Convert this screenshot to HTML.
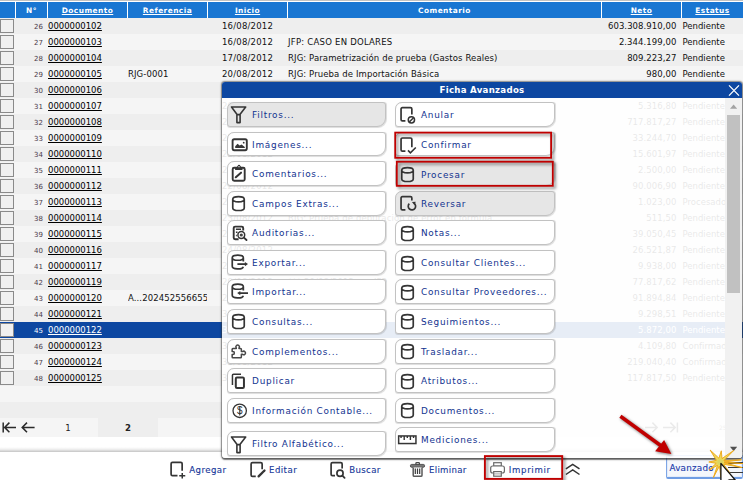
<!DOCTYPE html>
<html lang="es"><head><meta charset="utf-8"><title>Ficha Avanzados</title>
<style>
html,body{margin:0;padding:0;}
body{width:743px;height:480px;overflow:hidden;background:#fff;position:relative;font-family:"DejaVu Sans","Liberation Sans",sans-serif;font-size:8.5px;color:#111;}
.abs{position:absolute;}
#topstrip{left:0;top:0;width:743px;height:1px;background:#c2c2c2;}
.th{position:absolute;top:2px;height:16px;background:#1976d2;color:#fff;font-weight:bold;font-size:7.4px;letter-spacing:0.45px;text-align:center;line-height:17.6px;white-space:nowrap;}
.th u{text-decoration:underline;text-underline-offset:1px;}
.row{position:absolute;left:0;width:743px;height:16px;line-height:16px;white-space:nowrap;}
.row.e{background:#eeeeee;}
.row.o{background:#f5f5f5;}
.row.sel{background:#0d47a1;color:#fff;}
.row span{position:absolute;top:0;height:16px;}
.cb{position:absolute;left:0;top:1px;width:12px;height:12px;border:1px solid #8a8a8a;background:#f0f0f0;}
.n{left:16px;width:27px;text-align:right;font-size:7px;color:#4a3a4a;top:1px !important;}
.row.sel .n{color:#fff;}
.d{left:48px;text-decoration:underline;color:#000;letter-spacing:-0.02px;}
.row.sel .d{color:#fff;}
.r{left:128px;width:79px;overflow:hidden;letter-spacing:0.1px;}
.i{left:222px;letter-spacing:0.2px;}
.c{left:288px;letter-spacing:0.107px;}
.m{left:602px;width:74.5px;text-align:right;letter-spacing:0.07px;}
.s{left:682.5px;letter-spacing:0px;}
#popup{left:222px;top:82px;width:520px;height:376px;border-radius:3px;box-shadow:0 0 1.5px 0.8px rgba(50,50,50,0.58),0 1.2px 1.2px rgba(40,40,40,0.55);overflow:hidden;}
#ptitle{left:0;top:0;width:520px;height:16px;background:#0d47a1;color:#fff;font-weight:bold;font-size:8.6px;letter-spacing:0.29px;text-align:center;line-height:17px;}
#pbody{left:0;top:16px;width:520px;height:360px;background:rgba(255,255,255,0.9);}
.btn{position:absolute;width:157.5px;height:22.7px;border:1px solid #c2c2c2;border-radius:7px 3px 9px 3px;background:#fff;color:#12328f;font-size:8.9px;line-height:23px;white-space:nowrap;box-shadow:0.4px 0.7px 0.7px rgba(0,0,0,0.13);}
.btn.g{background:#e6e6e6;}
.btn svg{position:absolute;}
.btn b{position:absolute;left:24.3px;top:1.1px;font-weight:normal;letter-spacing:0.74px;}
.tb{position:absolute;top:463px;height:16px;line-height:15px;color:#16389a;font-size:8.6px;letter-spacing:0.45px;white-space:nowrap;-webkit-text-stroke:0.12px #16389a;}
</style></head><body>
<div class="abs" id="topstrip"></div>
<div class="th" style="left:0px;width:15px"></div>
<div class="th" style="left:16px;width:31px">N°</div>
<div class="th" style="left:48px;width:79px"><u>Documento</u></div>
<div class="th" style="left:128px;width:79px"><u>Referencia</u></div>
<div class="th" style="left:208px;width:79px"><u>Inicio</u></div>
<div class="th" style="left:288px;width:313px">Comentario</div>
<div class="th" style="left:602px;width:79px"><u>Neto</u></div>
<div class="th" style="left:682px;width:61px"><u>Estatus</u></div>
<div class="row e" style="top:18px"><i class="cb"></i><span class="n">26</span><span class="d">0000000102</span><span class="r"></span><span class="i">16/08/2012</span><span class="c"></span><span class="m">603.308.910,00</span><span class="s">Pendiente</span></div>
<div class="row o" style="top:34px"><i class="cb"></i><span class="n">27</span><span class="d">0000000103</span><span class="r"></span><span class="i">16/08/2012</span><span class="c" style="letter-spacing:0.24px">JFP: CASO EN DOLARES</span><span class="m">2.344.199,00</span><span class="s">Pendiente</span></div>
<div class="row e" style="top:50px"><i class="cb"></i><span class="n">28</span><span class="d">0000000104</span><span class="r"></span><span class="i">17/08/2012</span><span class="c">RJG: Parametrización de prueba (Gastos Reales)</span><span class="m">809.223,27</span><span class="s">Pendiente</span></div>
<div class="row o" style="top:66px"><i class="cb"></i><span class="n">29</span><span class="d">0000000105</span><span class="r">RJG-0001</span><span class="i">20/08/2012</span><span class="c">RJG: Prueba de Importación Básica</span><span class="m">980,00</span><span class="s">Pendiente</span></div>
<div class="row e" style="top:82px"><i class="cb"></i><span class="n">30</span><span class="d">0000000106</span><span class="r"></span><span class="i">20/08/2012</span><span class="c"></span><span class="m">1.250,00</span><span class="s">Pendiente</span></div>
<div class="row o" style="top:98px"><i class="cb"></i><span class="n">31</span><span class="d">0000000107</span><span class="r"></span><span class="i">20/08/2012</span><span class="c"></span><span class="m">5.316,80</span><span class="s">Pendiente</span></div>
<div class="row e" style="top:114px"><i class="cb"></i><span class="n">32</span><span class="d">0000000108</span><span class="r"></span><span class="i">21/08/2012</span><span class="c"></span><span class="m">717.817,27</span><span class="s">Pendiente</span></div>
<div class="row o" style="top:130px"><i class="cb"></i><span class="n">33</span><span class="d">0000000109</span><span class="r"></span><span class="i">21/08/2012</span><span class="c"></span><span class="m">33.244,70</span><span class="s">Pendiente</span></div>
<div class="row e" style="top:146px"><i class="cb"></i><span class="n">34</span><span class="d">0000000110</span><span class="r"></span><span class="i">22/08/2012</span><span class="c"></span><span class="m">15.601,97</span><span class="s">Pendiente</span></div>
<div class="row o" style="top:162px"><i class="cb"></i><span class="n">35</span><span class="d">0000000111</span><span class="r"></span><span class="i">22/08/2012</span><span class="c"></span><span class="m">2.500,00</span><span class="s">Pendiente</span></div>
<div class="row e" style="top:178px"><i class="cb"></i><span class="n">36</span><span class="d">0000000112</span><span class="r"></span><span class="i">22/08/2012</span><span class="c"></span><span class="m">90.006,90</span><span class="s">Pendiente</span></div>
<div class="row o" style="top:194px"><i class="cb"></i><span class="n">37</span><span class="d">0000000113</span><span class="r"></span><span class="i">23/08/2012</span><span class="c">RJG: Prueba Formula</span><span class="m">1.023,00</span><span class="s">Procesado</span></div>
<div class="row e" style="top:210px"><i class="cb"></i><span class="n">38</span><span class="d">0000000114</span><span class="r"></span><span class="i">23/08/2012</span><span class="c">RJG: Prueba de depuración de error en formula.</span><span class="m">511,50</span><span class="s">Pendiente</span></div>
<div class="row o" style="top:226px"><i class="cb"></i><span class="n">39</span><span class="d">0000000115</span><span class="r"></span><span class="i">24/08/2012</span><span class="c"></span><span class="m">39.050,45</span><span class="s">Pendiente</span></div>
<div class="row e" style="top:242px"><i class="cb"></i><span class="n">40</span><span class="d">0000000116</span><span class="r"></span><span class="i">24/08/2012</span><span class="c"></span><span class="m">26.521,87</span><span class="s">Pendiente</span></div>
<div class="row o" style="top:258px"><i class="cb"></i><span class="n">41</span><span class="d">0000000117</span><span class="r"></span><span class="i">28/08/2012</span><span class="c"></span><span class="m">9.938,00</span><span class="s">Pendiente</span></div>
<div class="row e" style="top:274px"><i class="cb"></i><span class="n">42</span><span class="d">0000000119</span><span class="r"></span><span class="i">29/08/2012</span><span class="c">*** 29/08/2012 por JFP</span><span class="m">77.817,62</span><span class="s">Pendiente</span></div>
<div class="row o" style="top:290px"><i class="cb"></i><span class="n">43</span><span class="d">0000000120</span><span class="r">A...202452556655</span><span class="i">29/08/2012</span><span class="c"></span><span class="m">91.894,84</span><span class="s">Pendiente</span></div>
<div class="row e" style="top:306px"><i class="cb"></i><span class="n">44</span><span class="d">0000000121</span><span class="r"></span><span class="i">30/08/2012</span><span class="c"></span><span class="m">9.298,51</span><span class="s">Pendiente</span></div>
<div class="row sel" style="top:322px"><i class="cb"></i><span class="n">45</span><span class="d">0000000122</span><span class="r"></span><span class="i">30/08/2012</span><span class="c"></span><span class="m">5.872,00</span><span class="s">Pendiente</span></div>
<div class="row e" style="top:338px"><i class="cb"></i><span class="n">46</span><span class="d">0000000123</span><span class="r"></span><span class="i">31/08/2012</span><span class="c"></span><span class="m">4.109,80</span><span class="s">Confirmado</span></div>
<div class="row o" style="top:354px"><i class="cb"></i><span class="n">47</span><span class="d">0000000124</span><span class="r"></span><span class="i">31/08/2012</span><span class="c"></span><span class="m">219.040,40</span><span class="s">Confirmado</span></div>
<div class="row e" style="top:370px"><i class="cb"></i><span class="n">48</span><span class="d">0000000125</span><span class="r"></span><span class="i">31/08/2012</span><span class="c"></span><span class="m">117.817,50</span><span class="s">Pendiente</span></div>
<div class="row o" style="top:386px"></div>
<div class="row e" style="top:402px"></div>
<div class="abs" style="left:0;top:418px;width:743px;height:19px;background:#f5f5f5"></div>
<div class="abs" style="left:98px;top:418px;width:60px;height:19px;background:#eeeeee"></div>
<svg class="abs" style="left:0;top:418px" width="40" height="19" viewBox="0 0 40 19"><g fill="none" stroke="#2a2a2a" stroke-width="1.5"><path d="M3.2 4.4 V14.4 M4.6 9.4 H16 M9.4 4.6 L4.6 9.4 L9.4 14.2"/><path d="M22 9.4 H34.6 M27 4.6 L22.2 9.4 L27 14.2"/></g></svg>
<div class="abs" style="left:58px;top:419.4px;width:20px;height:19px;line-height:19px;text-align:center;font-size:8.6px;color:#222">1</div>
<div class="abs" style="left:118px;top:419.4px;width:20px;height:19px;line-height:19px;text-align:center;font-size:8.6px;font-weight:bold;color:#222">2</div>
<svg class="abs" style="left:641px;top:418px" width="45" height="19" viewBox="0 0 45 19"><g fill="none" stroke="#2a2a2a" stroke-width="1.5"><path d="M4 9.4 H16 M11.4 4.6 L16.2 9.4 L11.4 14.2"/><path d="M22 9.4 H34 M29.4 4.6 L34.2 9.4 L29.4 14.2 M36.4 4.4 V14.4"/></g></svg>
<div class="abs" style="left:719px;top:424px;font-size:6px;color:#555">25</div>
<div class="abs" style="left:0;top:446.5px;width:743px;height:5.5px;background:linear-gradient(#ffffff,#f0f0f0 45%,#c4c4c4)"></div>
<svg class="abs" style="left:160px;top:455px" width="440" height="25" viewBox="160 455 440 25"><path d="M182.15 470.7 V463.8 Q182.15 462.45 180.8 462.45 H172.45 Q171.1 462.45 171.1 463.8 V474.3 Q171.1 475.65 172.45 475.65 H177.5" fill="none" stroke="#353535" stroke-width="1.7"/><path d="M182.25 473 V478.5 M179.25 475.75 H185.25" fill="none" stroke="#353535" stroke-width="1.5"/><path d="M262.15 469.2 V463.9 Q262.15 462.55 260.8 462.55 H252.45 Q251.1 462.55 251.1 463.9 V475 Q251.1 476.35 252.45 476.35 H255.75" fill="none" stroke="#353535" stroke-width="1.7"/><path d="M258.6 476.4 L264.5 470.5" stroke="#353535" stroke-width="2.3" stroke-linecap="round"/><path d="M342.15 468.5 V463.9 Q342.15 462.55 340.8 462.55 H332.45 Q331.1 462.55 331.1 463.9 V474.3 Q331.1 475.65 332.45 475.65 H335" fill="none" stroke="#353535" stroke-width="1.7"/><circle cx="340" cy="473.25" r="3.1" fill="none" stroke="#353535" stroke-width="1.7"/><path d="M342.4 475.6 L344.6 477.8" stroke="#353535" stroke-width="1.8" stroke-linecap="round"/><rect x="415.9" y="462.6" width="3.5" height="2.4" rx="0.8" fill="#fff" stroke="#4a4a4a" stroke-width="1.3"/><rect x="410.4" y="464.4" width="14.2" height="2.9" rx="1.3" fill="#777" stroke="#4a4a4a" stroke-width="0.9"/><path d="M413.2 467.6 V475.2 Q413.2 476.3 414.3 476.3 H420.9 Q422 476.3 422 475.2 V467.6" fill="#fff" stroke="#5a5a5a" stroke-width="1.5"/><path d="M415.3 468.6 V474 M417.5 468.6 V474 M419.7 468.6 V474" stroke="#3a3a3a" stroke-width="1.2"/><rect x="493.7" y="462.7" width="7.6" height="3.4" fill="#fff" stroke="#6a6a6a" stroke-width="1.2"/><rect x="490.7" y="466" width="13.7" height="7" rx="2" fill="#fff" stroke="#6a6a6a" stroke-width="1.2"/><rect x="493.7" y="471.6" width="7.6" height="4.6" fill="#fff" stroke="#6a6a6a" stroke-width="1.2"/><path d="M493.7 473.9 H501.3" stroke="#8a8a8a" stroke-width="0.8"/><path d="M565.9 468.9 L572.7 464.4 L579.5 468.9 M565.9 474.5 L572.7 469.9 L579.5 474.5" fill="none" stroke="#353535" stroke-width="1.5"/></svg>
<div class="tb" style="left:189.2px;letter-spacing:0.45px">Agregar</div>
<div class="tb" style="left:269px;letter-spacing:0.45px">Editar</div>
<div class="tb" style="left:349.3px;letter-spacing:0.33px">Buscar</div>
<div class="tb" style="left:429px;letter-spacing:0.29px">Eliminar</div>
<div class="tb" style="left:508.8px;letter-spacing:0.67px">Imprimir</div>
<svg class="abs" style="left:470px;top:445px;z-index:5;filter:drop-shadow(2px 2px 1.8px rgba(0,0,0,0.5))" width="110" height="35" viewBox="470 445 110 35"><rect x="484.9" y="456.1" width="77.3" height="22.8" fill="none" stroke="#c00000" stroke-width="1.9"/></svg>
<div class="abs" style="left:666px;top:455px;width:75px;height:21px;border:1px solid #7ea6e6;border-bottom:2px solid #6f9de4;border-radius:2px;background:#f4f7fc;box-shadow:inset 0 0 0 1px #e4ecf9"></div>
<div class="tb" style="left:669.5px;top:461px;color:#1c3bb0;font-size:8.8px;letter-spacing:0.2px">Avanzado</div>
<div class="abs" style="left:728px;top:462px;width:15px;height:1.5px;background:#3c3c3c"></div><div class="abs" style="left:728px;top:466.5px;width:15px;height:1.5px;background:#3c3c3c"></div><div class="abs" style="left:728px;top:471.5px;width:15px;height:1.5px;background:#3c3c3c"></div>
<div class="abs" id="popup">
<div class="abs" id="ptitle">Ficha Avanzados</div>
<svg class="abs" style="left:505px;top:2px" width="14" height="13" viewBox="0 0 14 13"><path d="M2 1.4 L12 11.6 M12 1.4 L2 11.6" stroke="#fff" stroke-width="1.3" fill="none"/></svg>
<div class="abs" id="pbody"></div>
<div class="abs" style="left:503px;top:16px;width:17px;height:360px;background:#f1f1f1"></div>
<div class="abs" style="left:505px;top:33px;width:13px;height:177.5px;background:#c1c1c1"></div>
<svg class="abs" style="left:503px;top:16px" width="17" height="17" viewBox="0 0 17 17"><path d="M5 10.8 L8.6 6.4 L12.2 10.8 Z" fill="#a3a3a3"/></svg>
<svg class="abs" style="left:503px;top:359px" width="17" height="17" viewBox="0 0 17 17"><path d="M5 5.8 L8.6 10.2 L12.2 5.8 Z" fill="#505050"/></svg>
<div class="btn g" style="left:4.8px;top:19.90px"><svg width="28" height="26" viewBox="0 0 28 26" style="left:-1px;top:-1px"><path d="M4.5 5 H18.7 L13.1 12.2 V20.6 H9.9 V12.2 Z M9.9 12.6 H13.1" fill="none" stroke="#353535" stroke-width="1.6" stroke-linejoin="round"/></svg><b>Filtros...</b></div>
<div class="btn" style="left:4.8px;top:49.70px"><svg width="28" height="26" viewBox="0 0 28 26" style="left:-1px;top:-1px"><rect x="5.6" y="7.2" width="14.2" height="11" rx="1.6" fill="none" stroke="#353535" stroke-width="1.9"/><path d="M8.2 16 V14.2 L10.6 11.8 L12.6 13.6 L14.6 12.4 L17.8 15 V16 Z" fill="#353535"/><circle cx="16.7" cy="10.7" r="0.9" fill="#353535"/></svg><b>Imágenes...</b></div>
<div class="btn" style="left:4.8px;top:79.20px"><svg width="28" height="26" viewBox="0 0 28 26" style="left:-1px;top:-1px"><rect x="5.7" y="6.7" width="12" height="13.1" rx="1.5" fill="none" stroke="#353535" stroke-width="1.9"/><path d="M8.1 9 V6.3 H9.7 L11.2 4.1 Q12 3.4 12.8 4.1 L14.3 6.3 H15.5 V9 Z" fill="#353535"/><circle cx="12" cy="5.7" r="0.65" fill="#fff"/><path d="M8.8 16.2 L14 11.7" stroke="#353535" stroke-width="2.1" stroke-linecap="round"/></svg><b>Comentarios...</b></div>
<div class="btn" style="left:4.8px;top:108.90px"><svg width="28" height="26" viewBox="0 0 28 26" style="left:-1px;top:-1px"><path d="M5.75 8.2 A5.75 2.6 0 0 1 17.25 8.2 V16.9 A5.75 2.6 0 0 1 5.75 16.9 Z M5.75 8.2 A5.75 2.6 0 0 0 17.25 8.2" fill="none" stroke="#353535" stroke-width="1.7"/></svg><b>Campos Extras...</b></div>
<div class="btn" style="left:4.8px;top:138.30px"><svg width="28" height="26" viewBox="0 0 28 26" style="left:-1px;top:-1px"><path d="M16.2 10.6 V8 Q16.2 6.6 14.8 6.6 H8.1 Q6.7 6.6 6.7 8 V17.8 Q6.7 19.2 8.1 19.2 H11.6" fill="none" stroke="#353535" stroke-width="1.9"/><path d="M8.9 9.3 H14 M8.9 12.3 H10.5 M8.9 15.6 H9.8" stroke="#353535" stroke-width="1.5"/><circle cx="14.3" cy="15" r="3.4" fill="#fff" stroke="#353535" stroke-width="1.5"/><circle cx="14.3" cy="15" r="1.6" fill="#444"/><path d="M16.9 17.6 L19.5 20" stroke="#353535" stroke-width="1.9" stroke-linecap="round"/></svg><b>Auditorias...</b></div>
<div class="btn" style="left:4.8px;top:168.20px"><svg width="28" height="26" viewBox="0 0 28 26" style="left:-1px;top:-1px"><path d="M16.35 11.6 V7.65 A5.55 2.6 0 0 0 5.25 7.65 V16.35 A5.55 2.6 0 0 0 16.3 16.7 M5.25 7.65 A5.55 2.6 0 0 0 16.35 7.65" fill="none" stroke="#353535" stroke-width="1.7"/><path d="M10.4 14.1 H18.6" fill="none" stroke="#353535" stroke-width="1.8"/><path d="M17.9 11.9 L21 14.1 L17.9 16.3 Z" fill="#353535"/></svg><b>Exportar...</b></div>
<div class="btn" style="left:4.8px;top:197.20px"><svg width="28" height="26" viewBox="0 0 28 26" style="left:-1px;top:-1px"><path d="M16.35 11.6 V7.65 A5.55 2.6 0 0 0 5.25 7.65 V16.35 A5.55 2.6 0 0 0 16.3 16.7 M5.25 7.65 A5.55 2.6 0 0 0 16.35 7.65" fill="none" stroke="#353535" stroke-width="1.7"/><path d="M12.6 14.1 H21" fill="none" stroke="#353535" stroke-width="1.8"/><path d="M13.3 11.9 L10.2 14.1 L13.3 16.3 Z" fill="#353535"/></svg><b>Importar...</b></div>
<div class="btn" style="left:4.8px;top:227.00px"><svg width="28" height="26" viewBox="0 0 28 26" style="left:-1px;top:-1px"><path d="M5.75 8.2 A5.75 2.6 0 0 1 17.25 8.2 V16.9 A5.75 2.6 0 0 1 5.75 16.9 Z M5.75 8.2 A5.75 2.6 0 0 0 17.25 8.2" fill="none" stroke="#353535" stroke-width="1.7"/></svg><b>Consultas...</b></div>
<div class="btn" style="left:4.8px;top:256.90px"><svg width="28" height="26" viewBox="0 0 28 26" style="left:-1px;top:-1px"><path d="M5.15 10.2 Q5.15 9.45 5.9 9.45 H9.3 V8.9 A1.75 1.75 0 1 1 12 8.9 V9.45 H13.6 Q14.35 9.45 14.35 10.2 V12.6 H15.6 A1.75 1.75 0 1 1 15.6 15.3 H14.35 V17.9 Q14.35 18.65 13.6 18.65 H5.9 Q5.15 18.65 5.15 17.9 V15.4 H5.9 A1.5 1.5 0 0 0 5.9 12.4 H5.15 Z" fill="none" stroke="#474747" stroke-width="1.5" stroke-linejoin="round"/></svg><b>Complementos...</b></div>
<div class="btn" style="left:4.8px;top:286.30px"><svg width="28" height="26" viewBox="0 0 28 26" style="left:-1px;top:-1px"><path d="M5.45 17 V7.2 Q5.45 6.15 6.5 6.15 H14" fill="none" stroke="#353535" stroke-width="1.5"/><rect x="8.8" y="9.5" width="8.15" height="10.5" rx="1.2" fill="none" stroke="#353535" stroke-width="2"/></svg><b>Duplicar</b></div>
<div class="btn" style="left:4.8px;top:315.90px"><svg width="28" height="26" viewBox="0 0 28 26" style="left:-1px;top:-1px"><circle cx="12.7" cy="12.8" r="6.7" fill="none" stroke="#353535" stroke-width="1.3"/><text x="12.7" y="16.3" font-family="Liberation Sans, sans-serif" font-size="10" text-anchor="middle" fill="#353535">$</text><path d="M12.7 8 V17.6" stroke="#353535" stroke-width="0.8"/></svg><b>Información Contable...</b></div>
<div class="btn" style="left:4.8px;top:349.20px"><svg width="28" height="26" viewBox="0 0 28 26" style="left:-0.4px;top:-0.2px"><path d="M4.5 5 H18.7 L13.1 12.2 V20.6 H9.9 V12.2 Z M9.9 12.6 H13.1" fill="none" stroke="#353535" stroke-width="1.6" stroke-linejoin="round"/></svg><b>Filtro Alfabético...</b></div>
<div class="btn" style="left:173.2px;top:19.90px"><svg width="28" height="26" viewBox="0 0 28 26" style="left:-1px;top:-1px"><path d="M16.85 12.4 V7 Q16.85 5.65 15.5 5.65 H7.4 Q6.05 5.65 6.05 7 V17.5 Q6.05 18.85 7.4 18.85 H10.4" fill="none" stroke="#353535" stroke-width="1.7"/><circle cx="16.4" cy="17.85" r="3.15" fill="none" stroke="#353535" stroke-width="1.5"/><path d="M14.3 19.95 L18.5 15.75" stroke="#353535" stroke-width="1.5"/></svg><b style="left:24.8px">Anular</b></div>
<div class="btn" style="left:173.2px;top:49.70px"><svg width="28" height="26" viewBox="0 0 28 26" style="left:-1px;top:-1px"><path d="M16.85 15.3 V7.3 Q16.85 6 15.5 6 H7.4 Q6.05 6 6.05 7.3 V17.8 Q6.05 19.15 7.4 19.15 H10.4" fill="none" stroke="#353535" stroke-width="1.7"/><path d="M13 18.4 L15.4 20.8 L20.8 15.5" fill="none" stroke="#353535" stroke-width="1.6"/></svg><b style="left:24.8px">Confirmar</b></div>
<div class="btn g" style="left:173.2px;top:79.20px"><svg width="28" height="26" viewBox="0 0 28 26" style="left:0.1px;top:-0.6px"><path d="M5.75 8.2 A5.75 2.6 0 0 1 17.25 8.2 V16.9 A5.75 2.6 0 0 1 5.75 16.9 Z M5.75 8.2 A5.75 2.6 0 0 0 17.25 8.2" fill="none" stroke="#353535" stroke-width="1.7"/></svg><b style="left:24.8px;top:2px">Procesar</b></div>
<div class="btn g" style="left:173.2px;top:108.90px"><svg width="28" height="26" viewBox="0 0 28 26" style="left:-1px;top:-1px"><path d="M16.85 9.5 V7.05 Q16.85 5.7 15.5 5.7 H7.4 Q6.05 5.7 6.05 7.05 V17.55 Q6.05 18.9 7.4 18.9 H10.4" fill="none" stroke="#353535" stroke-width="1.7"/><path d="M14.3 12.6 A3.7 3.7 0 1 0 18.9 12.1" fill="none" stroke="#353535" stroke-width="1.7"/><path d="M16.9 10.9 L20.7 10.8 L19.6 14.3 Z" fill="#353535"/></svg><b style="left:24.8px">Reversar</b></div>
<div class="btn" style="left:173.2px;top:138.30px"><svg width="28" height="26" viewBox="0 0 28 26" style="left:0.1px;top:-0.6px"><path d="M5.75 8.2 A5.75 2.6 0 0 1 17.25 8.2 V16.9 A5.75 2.6 0 0 1 5.75 16.9 Z M5.75 8.2 A5.75 2.6 0 0 0 17.25 8.2" fill="none" stroke="#353535" stroke-width="1.7"/></svg><b style="left:24.8px">Notas...</b></div>
<div class="btn" style="left:173.2px;top:168.20px"><svg width="28" height="26" viewBox="0 0 28 26" style="left:0.1px;top:-0.6px"><path d="M5.75 8.2 A5.75 2.6 0 0 1 17.25 8.2 V16.9 A5.75 2.6 0 0 1 5.75 16.9 Z M5.75 8.2 A5.75 2.6 0 0 0 17.25 8.2" fill="none" stroke="#353535" stroke-width="1.7"/></svg><b style="left:24.8px">Consultar Clientes...</b></div>
<div class="btn" style="left:173.2px;top:197.20px"><svg width="28" height="26" viewBox="0 0 28 26" style="left:0.1px;top:-0.6px"><path d="M5.75 8.2 A5.75 2.6 0 0 1 17.25 8.2 V16.9 A5.75 2.6 0 0 1 5.75 16.9 Z M5.75 8.2 A5.75 2.6 0 0 0 17.25 8.2" fill="none" stroke="#353535" stroke-width="1.7"/></svg><b style="left:24.8px">Consultar Proveedores...</b></div>
<div class="btn" style="left:173.2px;top:227.00px"><svg width="28" height="26" viewBox="0 0 28 26" style="left:0.1px;top:-0.6px"><path d="M5.75 8.2 A5.75 2.6 0 0 1 17.25 8.2 V16.9 A5.75 2.6 0 0 1 5.75 16.9 Z M5.75 8.2 A5.75 2.6 0 0 0 17.25 8.2" fill="none" stroke="#353535" stroke-width="1.7"/></svg><b style="left:24.8px">Seguimientos...</b></div>
<div class="btn" style="left:173.2px;top:256.90px"><svg width="28" height="26" viewBox="0 0 28 26" style="left:0.1px;top:-0.6px"><path d="M5.75 8.2 A5.75 2.6 0 0 1 17.25 8.2 V16.9 A5.75 2.6 0 0 1 5.75 16.9 Z M5.75 8.2 A5.75 2.6 0 0 0 17.25 8.2" fill="none" stroke="#353535" stroke-width="1.7"/></svg><b style="left:24.8px">Trasladar...</b></div>
<div class="btn" style="left:173.2px;top:286.30px"><svg width="28" height="26" viewBox="0 0 28 26" style="left:0.1px;top:-0.6px"><path d="M5.75 8.2 A5.75 2.6 0 0 1 17.25 8.2 V16.9 A5.75 2.6 0 0 1 5.75 16.9 Z M5.75 8.2 A5.75 2.6 0 0 0 17.25 8.2" fill="none" stroke="#353535" stroke-width="1.7"/></svg><b style="left:24.8px">Atributos...</b></div>
<div class="btn" style="left:173.2px;top:315.90px"><svg width="28" height="26" viewBox="0 0 28 26" style="left:0.1px;top:-0.6px"><path d="M5.75 8.2 A5.75 2.6 0 0 1 17.25 8.2 V16.9 A5.75 2.6 0 0 1 5.75 16.9 Z M5.75 8.2 A5.75 2.6 0 0 0 17.25 8.2" fill="none" stroke="#353535" stroke-width="1.7"/></svg><b style="left:24.8px">Documentos...</b></div>
<div class="btn" style="left:173.2px;top:345.20px"><svg width="28" height="26" viewBox="0 0 28 26" style="left:-1px;top:-1px"><rect x="3.65" y="8.95" width="17.3" height="7.6" fill="none" stroke="#353535" stroke-width="1.5"/><path d="M6.05 9 V11.1 M9.2 9 V12.9 M12.3 9 V11.1 M15.4 9 V12.9 M18.55 9 V11.1" stroke="#353535" stroke-width="1.4"/></svg><b style="left:24.8px">Mediciones...</b></div>
</div>
<svg class="abs" style="left:380px;top:120px;filter:drop-shadow(2px 2px 1.8px rgba(0,0,0,0.5))" width="190" height="80" viewBox="380 120 190 80"><rect x="395.2" y="132.6" width="155.9" height="25.2" fill="none" stroke="#c00000" stroke-width="1.8"/><rect x="396.8" y="161.7" width="156" height="24.1" fill="none" stroke="#c00000" stroke-width="1.8"/></svg>
<svg class="abs" style="left:600px;top:400px;filter:drop-shadow(1.8px 1.8px 1.6px rgba(0,0,0,0.55))" width="100" height="70" viewBox="0 0 100 70"><path d="M20.4 16.3 L62 46.5" stroke="#c00000" stroke-width="3.6" stroke-linecap="butt" fill="none"/><path d="M71.4 53.9 L55.1 51.3 L64.1 40.1 Z" fill="#c00000"/></svg>
<svg class="abs" style="left:700px;top:444px" width="43" height="36" viewBox="700 444 43 36"><path d="M710.1 450.0 L718.9 458.2 L721.3 450.8 L722.0 458.5 L733.8 450.4 L723.9 460.5 L741.5 459.8 L724.2 462.0 L743.0 463.6 L724.2 462.7 L742.2 467.6 L723.6 464.2 L730.0 473.0 L721.7 465.9 L721.0 478.0 L719.4 466.1 L713.4 477.5 L717.5 465.3 L709.2 470.0 L716.2 463.3 L708.8 462.0 L716.4 460.3 Z" fill="#ecd85a" stroke="#eda513" stroke-width="0.9" stroke-linejoin="round"/><circle cx="720.1" cy="462.1" r="2.8" fill="#d9d565"/><path d="M720.9 463.4 V481 H727 L729 480 L735.2 480 Z" fill="#fff" stroke="#111" stroke-width="1.3" stroke-linejoin="round"/></svg>
</body></html>
